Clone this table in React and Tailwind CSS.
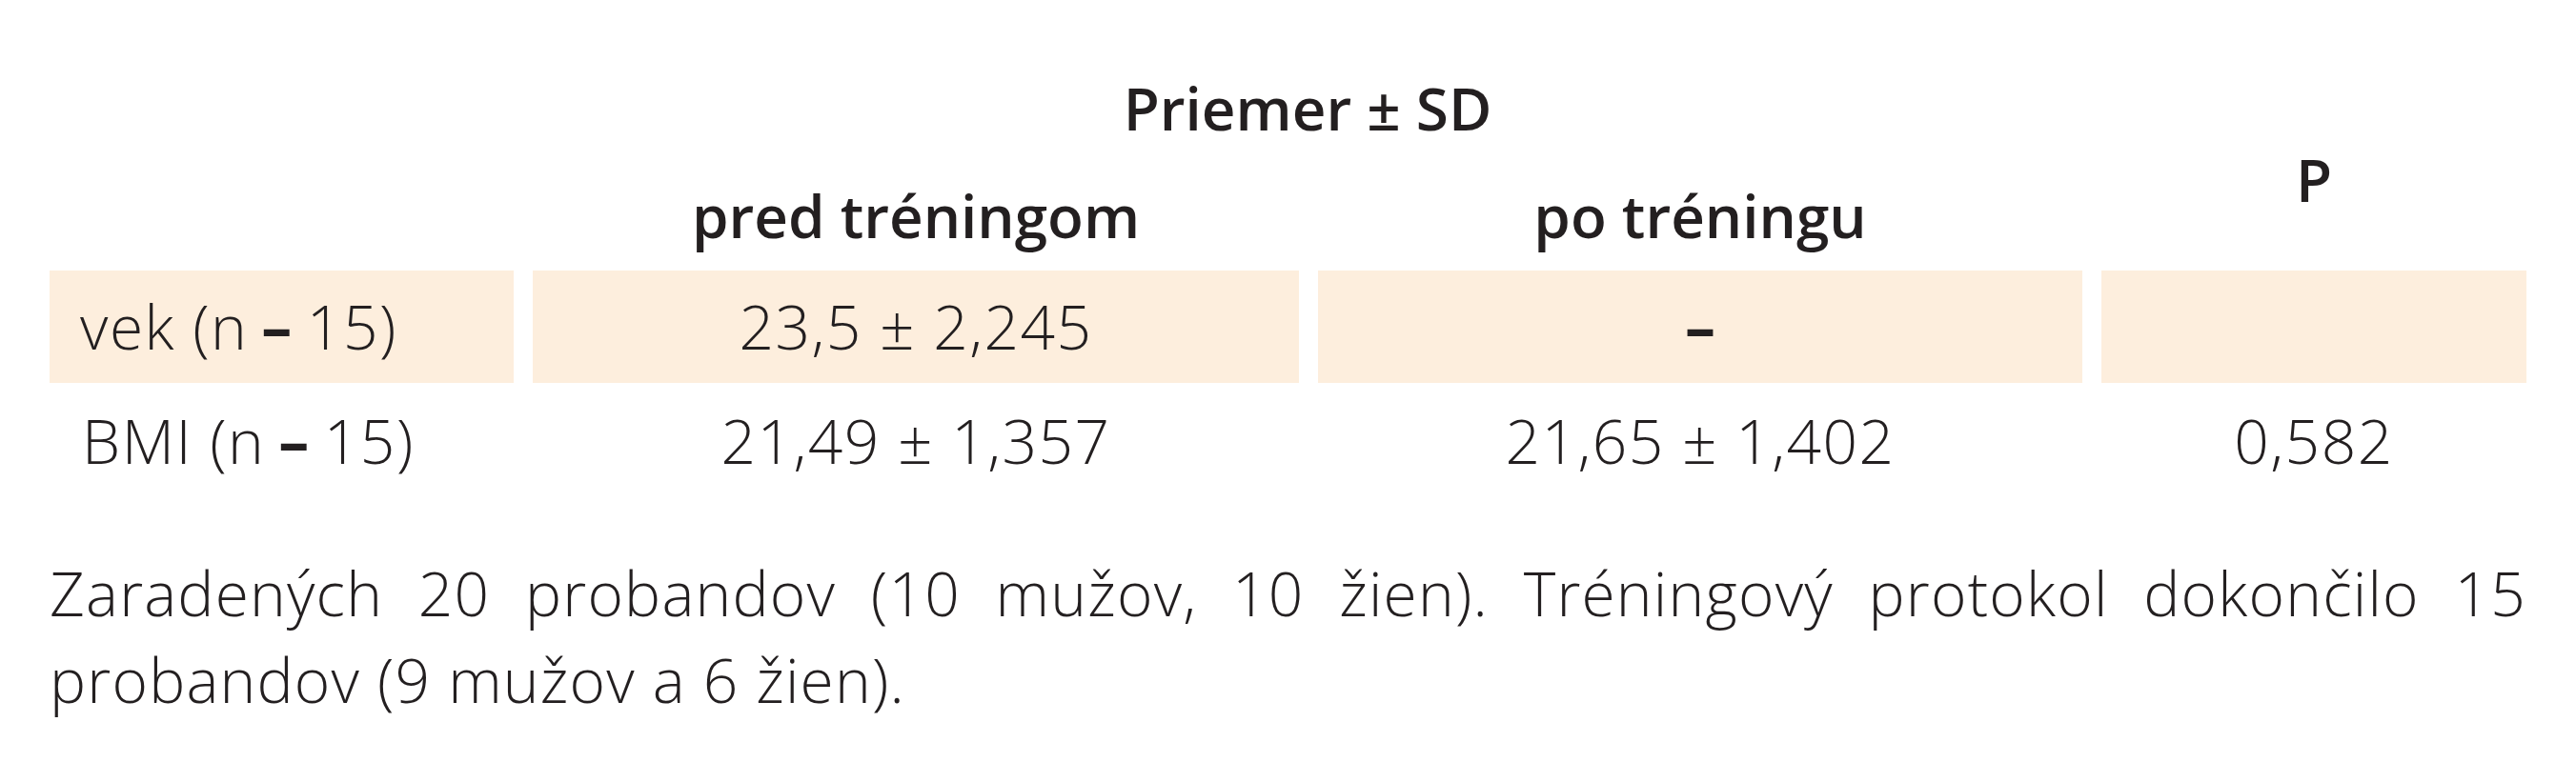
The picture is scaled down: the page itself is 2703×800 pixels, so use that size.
export default function App() {
  const font = { fontFamily: '"Open Sans", "Noto Sans", sans-serif' };
  return (
    <div className="w-[2703px] h-[800px] bg-white text-[#231f20] px-[52px]" style={font}>
      <div className="grid grid-cols-[487px_804px_802px_446px] gap-x-[20px]">
        {/* Header */}
        <div className="col-start-2 col-span-2 pt-[82px] text-center text-[62px] leading-[62px] font-semibold">
          Priemer ± SD
        </div>
        <div className="col-start-4 row-span-2 pt-[157px] text-center text-[62px] leading-[62px] font-semibold">
          P
        </div>
        <div className="col-start-2 pt-[51px] pb-[27px] text-center text-[62px] leading-[62px] font-semibold">
          pred tréningom
        </div>
        <div className="col-start-3 pt-[51px] pb-[27px] text-center text-[62px] leading-[62px] font-semibold">
          po tréningu
        </div>

        {/* Row 1 */}
        <div className="bg-[#fdeedd] h-[118px] flex items-center pl-[32px] text-[64px] leading-[64px] font-light tracking-[1.5px]">
          vek (n <span className="font-bold mx-[14px]">–</span> 15)
        </div>
        <div className="bg-[#fdeedd] h-[118px] flex items-center justify-center text-[64px] leading-[64px] font-light tracking-[1.5px]">
          23,5 ± 2,245
        </div>
        <div className="bg-[#fdeedd] h-[118px] flex items-center justify-center text-[64px] leading-[64px] font-bold">
          –
        </div>
        <div className="bg-[#fdeedd] h-[118px]"></div>

        {/* Row 2 */}
        <div className="h-[118px] flex items-center pl-[34px] pt-[4px] text-[64px] leading-[64px] font-light tracking-[1.5px]">
          BMI (n <span className="font-bold mx-[14px]">–</span> 15)
        </div>
        <div className="h-[118px] flex items-center justify-center pt-[4px] text-[64px] leading-[64px] font-light tracking-[1.5px]">
          21,49 ± 1,357
        </div>
        <div className="h-[118px] flex items-center justify-center pt-[4px] text-[64px] leading-[64px] font-light tracking-[1.5px]">
          21,65 ± 1,402
        </div>
        <div className="h-[118px] flex items-center justify-center pt-[4px] text-[64px] leading-[64px] font-light tracking-[1.5px]">
          0,582
        </div>
      </div>

      <p className="mt-[57px] w-[2599px] text-justify text-[64px] leading-[91px] font-light tracking-[1.2px]">
        Zaradených 20 probandov (10 mužov, 10 žien). Tréningový protokol dokončilo 15 probandov (9 mužov a 6 žien).
      </p>
    </div>
  );
}
